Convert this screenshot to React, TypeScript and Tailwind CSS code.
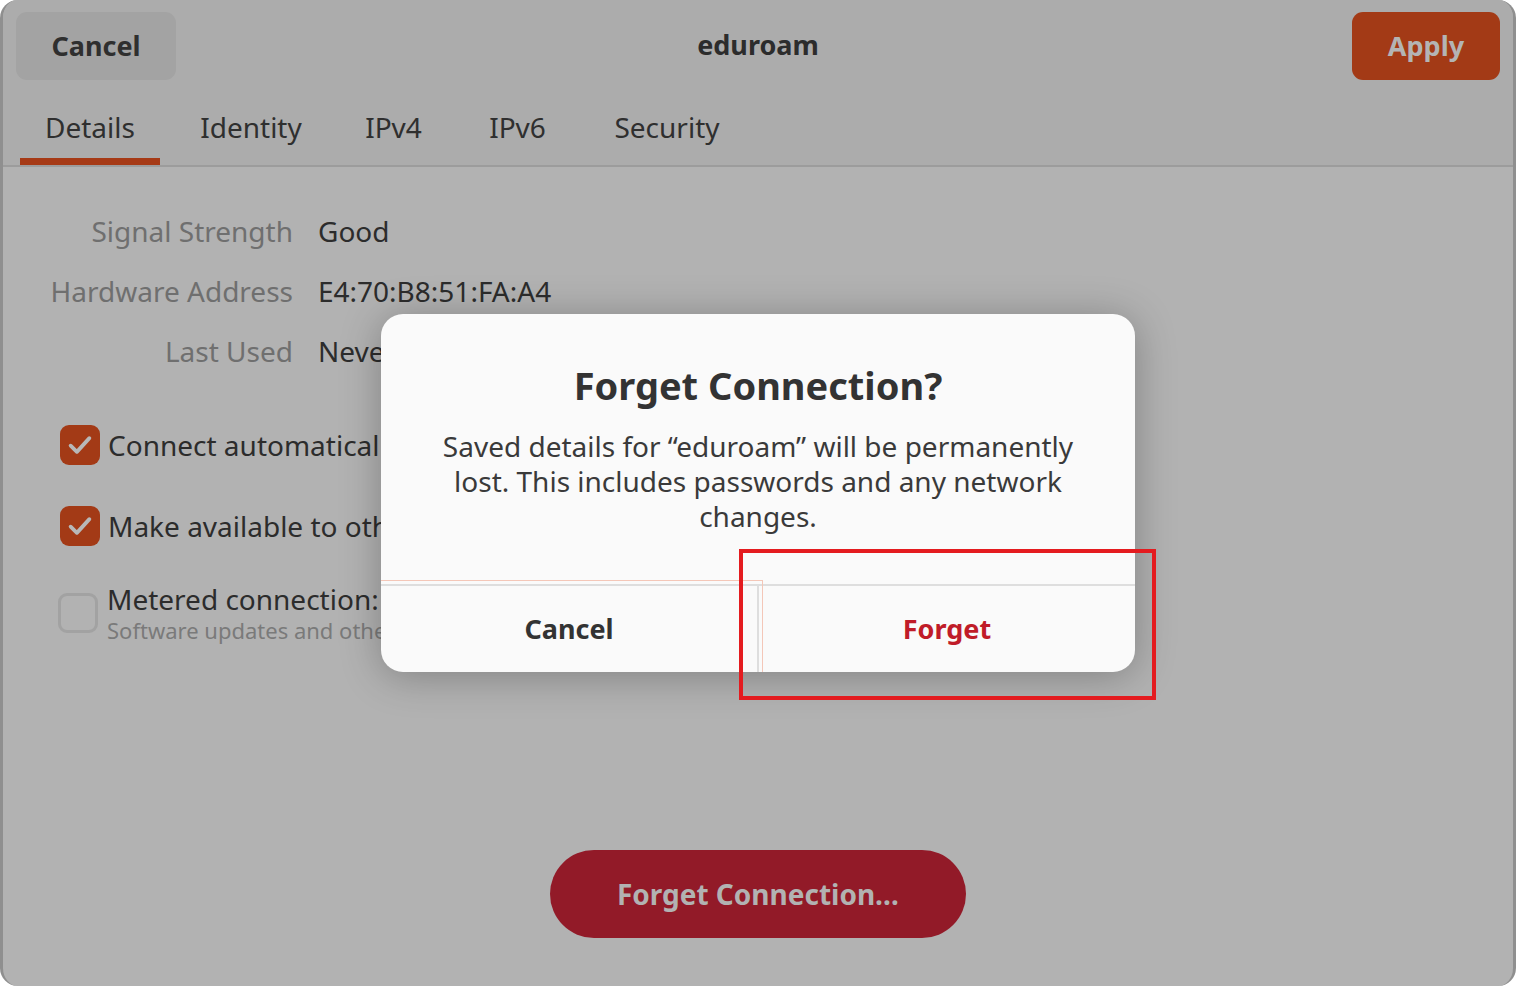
import React from "react";

const tabs = [
  { name: "Details", w: "w-[140px]" },
  { name: "Identity", w: "w-[182px]" },
  { name: "IPv4", w: "w-[103px]" },
  { name: "IPv6", w: "w-[145px]" },
  { name: "Security", w: "w-[154px]" },
];

const details = [
  { label: "Signal Strength", value: "Good" },
  { label: "Hardware Address", value: "E4:70:B8:51:FA:A4" },
  { label: "Last Used", value: "Never" },
];

function Check() {
  return (
    <svg width="30" height="30" viewBox="0 0 24 24" fill="none">
      <path d="M4.5 12.5l5 5L19.5 6.5" stroke="#b8b8b8" strokeWidth="3" strokeLinecap="round" strokeLinejoin="round" />
    </svg>
  );
}

export default function App() {
  return (
    <div
      className="relative w-[1516px] h-[986px] bg-white overflow-hidden"
      style={{ fontFamily: '"Noto Sans", "Open Sans", sans-serif' }}
    >
      {/* window */}
      <div className="flex flex-col w-full h-full rounded-[18px] bg-[#b2b2b2] border-x-[3px] border-[#8f8f8f] overflow-hidden">
        {/* header */}
        <div className="bg-[#acacac] border-b-2 border-[#9c9c9c]">
          <div className="grid grid-cols-[1fr_auto_1fr] items-center pl-[13px] pr-[13px] pt-[12px]">
            <div className="flex">
              <button className="w-[160px] h-[68px] rounded-[11px] bg-[#a3a3a3] text-[27px] font-bold text-[#2f2f2f]">
                Cancel
              </button>
            </div>
            <div className="text-[27px] font-bold text-[#2c2c2c] -mt-[2px]">eduroam</div>
            <div className="flex justify-end">
              <button className="w-[148px] h-[68px] rounded-[11px] bg-[#a33a16] text-[27px] font-bold text-[#b4b4b4]">
                Apply
              </button>
            </div>
          </div>
          <div className="flex pl-[17px] mt-[10px] h-[75px]">
            {tabs.map((t, i) => (
              <div
                key={t.name}
                className={`flex items-center justify-center h-full text-[28px] text-[#2f2f2f] border-b-[7px] ${t.w} ${
                  i === 0 ? "border-[#a63a16]" : "border-transparent"
                }`}
              >
                <span className="pt-[5px]">{t.name}</span>
              </div>
            ))}
          </div>
        </div>

        {/* content */}
        <div className="flex flex-col pt-[45px]">
          <div className="grid grid-cols-[290px_1fr] gap-x-[25px] gap-y-[22px] text-[28px] leading-[38px]">
            {details.map((d) => (
              <React.Fragment key={d.label}>
                <div className="text-right text-[#6f6f6f]">{d.label}</div>
                <div className="text-[#2c2c2c]">{d.value}</div>
              </React.Fragment>
            ))}
          </div>

          <div className="flex flex-col pl-[57px] mt-[54px] gap-[39px]">
            <div className="flex items-center gap-[8px]">
              <div className="w-[40px] h-[40px] rounded-[9px] bg-[#a33a16] flex items-center justify-center">
                <Check />
              </div>
              <span className="text-[28px] text-[#2c2c2c]">Connect automatically</span>
            </div>
            <div className="flex items-center gap-[8px]">
              <div className="w-[40px] h-[40px] rounded-[9px] bg-[#a33a16] flex items-center justify-center">
                <Check />
              </div>
              <span className="text-[28px] text-[#2c2c2c]">Make available to other users</span>
            </div>
            <div className="flex items-center gap-[9px] -ml-[2px] -mt-[1px]">
              <div className="w-[40px] h-[40px] rounded-[9px] border-[3px] border-[#a2a2a2]" />
              <div className="flex flex-col leading-none">
                <span className="text-[28px] text-[#2c2c2c]">Metered connection: has data limits or can incur charges</span>
                <span className="text-[22px] text-[#7a7a7a] mt-[6px]">Software updates and other large downloads will not be started automatically.</span>
              </div>
            </div>
          </div>

          <div className="flex justify-center mt-[209px]">
            <button className="w-[416px] h-[88px] rounded-full bg-[#921a28] text-[28px] font-bold text-[#b2b2b2]">
              Forget Connection…
            </button>
          </div>
        </div>
      </div>

      {/* dialog */}
      <div className="absolute left-[381px] top-[314px] w-[754px] h-[358px] rounded-[22px] bg-[#fafafa] shadow-[0_4px_40px_rgba(0,0,0,0.28)] flex flex-col overflow-hidden">
        <div className="flex flex-col items-center pt-[46px] h-[270px]">
          <div className="text-[38px] font-bold text-[#333333] leading-[50px]">Forget Connection?</div>
          <div className="mt-[19px] text-[28px] leading-[35px] text-[#3a3a3a] text-center">
            Saved details for “eduroam” will be permanently
            <br />
            lost. This includes passwords and any network
            <br />
            changes.
          </div>
        </div>
        <div className="flex flex-1 border-t-2 border-[#dedede]">
          <div className="flex-1 flex items-center justify-center border-r-2 border-[#dedede] text-[27px] font-bold text-[#333333]">
            Cancel
          </div>
          <div className="flex-1 flex items-center justify-center text-[27px] font-bold text-[#c01c28]">Forget</div>
        </div>
      </div>

      {/* faint annotation guides */}
      <div className="absolute left-[381px] top-[580px] w-[382px] h-[1px] bg-[#f4c7b8]" />
      <div className="absolute left-[762px] top-[580px] w-[1px] h-[92px] bg-[#f4c7b8]" />

      {/* red highlight */}
      <div className="absolute left-[739px] top-[549px] w-[417px] h-[151px] border-[4px] border-[#e41b1f]" />
    </div>
  );
}
